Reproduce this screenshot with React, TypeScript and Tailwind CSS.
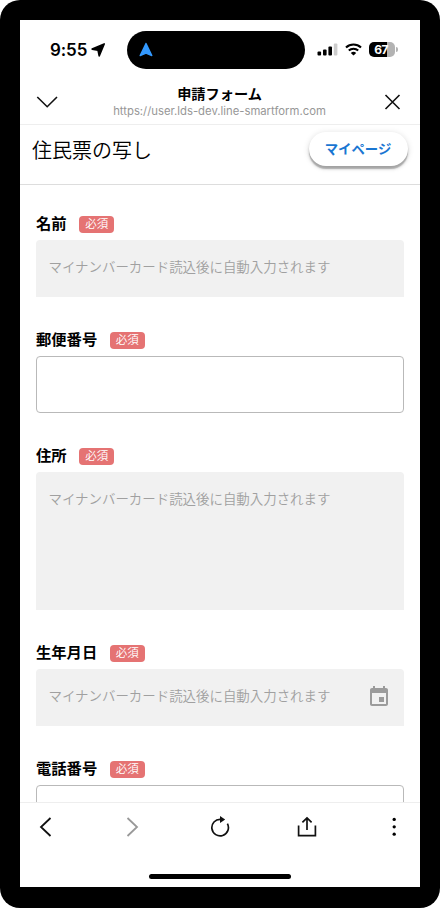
import React from "react";

const jp = "font-['Inter','Noto_Sans_CJK_JP',sans-serif]";
const PLACEHOLDER = "マイナンバーカード読込後に自動入力されます";

function Label({ text }: { text: string }) {
  return (
    <div className="flex h-[17px] items-center">
      <span className="mt-[1px] text-[15.3px] font-bold leading-[17px] text-black">{text}</span>
      <span className="mt-[4px] ml-[12.6px] flex h-[17px] w-[35px] items-center justify-center rounded-[4px] bg-[#e57373] pt-[1px] text-[11.5px] font-[350] leading-none text-white">
        必須
      </span>
    </div>
  );
}

function Field({
  label,
  box,
  children,
}: {
  label: string;
  box: string;
  children?: React.ReactNode;
}) {
  return (
    <div className="shrink-0">
      <Label text={label} />
      <div className={"mt-[9px] flex w-[368px] justify-between " + box}>{children}</div>
    </div>
  );
}

function Placeholder() {
  return (
    <span className="text-[13.45px] font-[350] leading-[20px] text-[#a0a0a0]">{PLACEHOLDER}</span>
  );
}

function StatusBar() {
  return (
    <div className="flex h-[60px] shrink-0 items-center">
      <span className="ml-[30px] w-[38px] text-[17px] font-semibold leading-none tracking-[-0.1px]">9:55</span>
      <svg className="ml-[3px]" width="14" height="14" viewBox="0 0 14 14">
        <path
          d="M13.2.9 1.200 6.100l5.800 1.100 1.200 5.700Z"
          stroke="#000"
          strokeWidth="1.600"
          strokeLinejoin="round"
        />
      </svg>
      <div className="ml-[22px] flex h-[38px] w-[178px] items-center rounded-full bg-black pl-3">
        <svg className="-mt-[1px]" width="14" height="15" viewBox="0 0 14 15">
          <path
            d="M7 1.500 1.200 13.500 7 11.200l5.800 2.300Z"
            fill="#3399ff"
            stroke="#3399ff"
            strokeWidth="1.400"
            strokeLinejoin="round"
          />
        </svg>
      </div>
      <svg className="ml-3 -mt-[1px]" width="21" height="13" viewBox="0 0 21 13">
        <rect x="0.5" y="8.5" width="3.6" height="4" rx="1" />
        <rect x="6" y="6.5" width="3.6" height="6" rx="1" />
        <rect x="11.4" y="3.5" width="3.6" height="9" rx="1" />
        <rect x="16.8" y=".5" width="3.6" height="12" rx="1" fill="#ccc" />
      </svg>
      <svg className="ml-[7px] -mt-[1px]" width="17" height="13" viewBox="0 0 17 13" fill="none" stroke="#000" strokeWidth="2.1">
        <path d="M1 4.6a10.8 10.8 0 0 1 15 0" />
        <path d="M3.8 7.6a6.8 6.8 0 0 1 9.4 0" />
        <path d="M8.5 12.6 5.8 9.9a4 4 0 0 1 5.4 0Z" fill="#000" stroke="none" />
      </svg>
      <div className="ml-[7px] -mt-[1px] flex h-[15px] w-[26px] items-center justify-center rounded-[5px] bg-[linear-gradient(90deg,#000_69%,#b3b3b3_69%)] pr-[2px] text-[12px] font-bold leading-none tracking-[-0.6px] text-white">
        67
      </div>
      <div className="ml-[1px] -mt-[1px] h-[5px] w-[1.5px] rounded-r-full bg-[#b3b3b3]" />
    </div>
  );
}

function Header() {
  return (
    <div className="flex h-[45px] shrink-0 items-center border-b border-[#eee] pl-[16px]">
      <svg width="22" height="14" viewBox="0 0 22 14" fill="none" stroke="#111" strokeWidth="1.6">
        <path d="m1.3 2 9.9 9.7L21 2" />
      </svg>
      <div className="ml-[53px] flex w-[217px] flex-col items-center">
        <span className="text-[14.2px] font-bold leading-[18px]">申請フォーム</span>
        <span className="whitespace-nowrap text-[11.3px] leading-[16px] text-[#979797]">https://user.lds-dev.line-smartform.com</span>
      </div>
      <svg className="ml-[56px]" width="17" height="16" viewBox="0 0 17 16" fill="none" stroke="#111" strokeWidth="1.6">
        <path d="m1.5 1 14 14M15.5 1 1.5 15" />
      </svg>
    </div>
  );
}

function Toolbar() {
  return (
    <div className="flex h-[85px] shrink-0 flex-col border-t border-[#eee] bg-white">
      <div className="mt-3 flex h-6 items-center">
        <svg className="ml-[19px]" width="13" height="20" viewBox="0 0 13 20" fill="none" stroke="#111" strokeWidth="1.8">
          <path d="m11.5 1-9.5 9 9.5 9" />
        </svg>
        <svg className="ml-[74px]" width="13" height="20" viewBox="0 0 13 20" fill="none" stroke="#999" strokeWidth="1.8">
          <path d="m1.5 1 9.5 9-9.5 9" />
        </svg>
        <svg className="ml-[71px]" width="20" height="22" viewBox="0 0 20 22" fill="none" stroke="#111" strokeWidth="1.7">
          <path d="M10.5 3.3A8.3 8.3 0 1 0 17.4 7.6" />
          <path d="m10 0 5.200 3.500L10 7Z" fill="#111" stroke="none" />
        </svg>
        <svg className="ml-[67px]" width="20" height="22" viewBox="0 0 20 22" fill="none" stroke="#111" strokeWidth="1.7">
          <path d="M1.6 9.6v10h16.8v-10M10 14V2M5.4 6.4 10 1.9l4.6 4.5" />
        </svg>
        <svg className="ml-[75px]" width="4" height="20" viewBox="0 0 4 20">
          <circle cx="2.2" cy="2.4" r="1.65" />
          <circle cx="2.2" cy="9.8" r="1.65" />
          <circle cx="2.2" cy="17.2" r="1.65" />
        </svg>
      </div>
      <div className="mt-[35px] ml-[129px] h-[5px] w-[142px] rounded-full bg-black" />
    </div>
  );
}

export default function App() {
  return (
    <div className={"h-[908px] w-[440px] overflow-hidden rounded-[20px] bg-black px-5 pt-5 " + jp}>
      <div className="flex h-[867px] w-[400px] flex-col bg-white text-black">
        <StatusBar />
        <Header />
        <div className="flex h-[60px] shrink-0 justify-between border-b border-[#ddd] pr-3 pl-3">
          <h1 className="mt-[11px] text-[20px] font-[350] leading-[30px]">住民票の写し</h1>
          <button className="mt-[7px] flex h-[34px] w-[99px] items-center justify-center rounded-full bg-white pr-[1px] text-[13.4px] font-bold text-[#1976d2] shadow-[0_3px_1px_rgba(0,0,0,0.2),0_3px_3px_rgba(0,0,0,0.14),0_1px_6px_rgba(0,0,0,0.14)]">
            マイページ
          </button>
        </div>
        <div className="flex min-h-0 flex-1 flex-col gap-[33px] overflow-hidden px-4 pt-[29px]">
          <Field label="名前" box="h-[57px] rounded-t-[4px] bg-[#f1f1f1] pt-[17px] pl-[12.5px]">
            <Placeholder />
          </Field>
          <Field label="郵便番号" box="h-[57px] rounded-[4px] border border-[#b9b9b9]" />
          <Field label="住所" box="h-[138px] rounded-t-[4px] bg-[#f1f1f1] pt-[17px] pl-[12.5px]">
            <Placeholder />
          </Field>
          <Field label="生年月日" box="h-[57px] rounded-t-[4px] bg-[#f1f1f1] pt-[17px] pr-[13px] pl-[12.5px]">
            <Placeholder />
            <svg className="-mt-[1px]" width="24" height="24" viewBox="0 0 24 24" fill="#9b9b9b">
              <path d="M17 12h-5v5h5v-5zM16 1v2H8V1H6v2H5c-1.11 0-1.99.9-1.99 2L3 19c0 1.1.89 2 2 2h14c1.1 0 2-.9 2-2V5c0-1.1-.9-2-2-2h-1V1h-2zm3 18H5V8h14v11z" />
            </svg>
          </Field>
          <Field label="電話番号" box="h-[57px] rounded-[4px] border border-[#b9b9b9]" />
        </div>
        <Toolbar />
      </div>
    </div>
  );
}
